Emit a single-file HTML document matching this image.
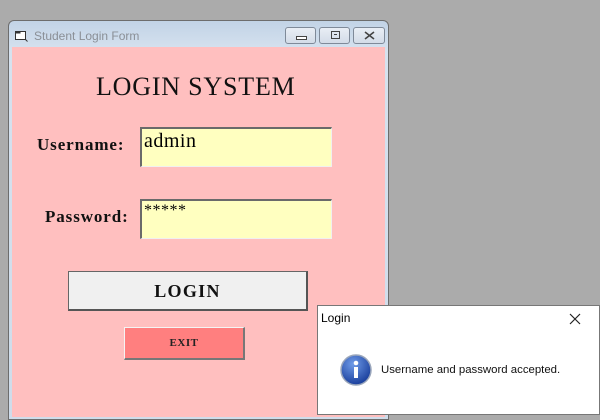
<!DOCTYPE html>
<html><head><style>
body{margin:0;width:600px;height:411px;background:#ababab;position:relative;overflow:hidden;font-family:"Liberation Serif",serif}
.win{position:absolute;left:8px;top:20px;width:381px;height:400px;background:linear-gradient(#c2d3e6,#d6e2ef 30px,#cfdcea);border:1px solid #6d6d6d;border-radius:6px 6px 0 0;box-sizing:border-box}
.title{position:absolute;left:25px;top:8px;font:12px "Liberation Sans",sans-serif;color:#8a8f96}
.tb{position:absolute;top:6px;height:17px;border:1px solid #7f8a99;border-radius:3px;background:linear-gradient(#e9eef5,#d3dce8);box-sizing:border-box}
.client{position:absolute;left:12px;top:47px;width:373px;height:370px;background:#ffbfbf}
.abs{position:absolute}
.tbx{position:absolute;left:140px;width:192px;height:40px;background:#ffffc0;border-top:2px solid #6a6a6a;border-left:2px solid #6a6a6a;border-right:1px solid #f0f0f0;border-bottom:1px solid #f0f0f0;box-sizing:border-box;font-size:20px;padding-left:2px;line-height:24px;letter-spacing:0.5px}
.lbl{position:absolute;font-weight:bold;font-size:17px;color:#111;letter-spacing:0.9px}
</style></head><body>
<div class="win">
 <svg class="abs" style="left:5px;top:8px" width="14" height="13"><rect x="1.5" y="2.5" width="10" height="8" fill="#fff" stroke="#333"/><rect x="1.5" y="2.5" width="5" height="2" fill="#333"/><path d="M11.5 10.5l2 2" stroke="#333"/></svg>
 <div class="title">Student Login Form</div>
 <div class="tb" style="left:276px;width:31px"><div class="abs" style="left:10px;top:8px;width:9px;height:2px;border:1px solid #444;background:#fff"></div></div>
 <div class="tb" style="left:310px;width:31px"><div class="abs" style="left:11px;top:3px;width:7px;height:6px;border:1px solid #444"><div class="abs" style="left:2px;top:2px;width:3px;height:1px;background:#444"></div></div></div>
 <div class="tb" style="left:344px;width:32px"><svg class="abs" style="left:10px;top:3px" width="11" height="9"><path d="M1 1L10 8M10 1L1 8" stroke="#444" stroke-width="1.6"/></svg></div>
</div>
<div class="client"></div>
<div class="abs" style="left:96px;top:72px;font-size:26px;color:#111;letter-spacing:0.8px">LOGIN SYSTEM</div>
<div class="lbl" style="left:37px;top:135px">Username:</div>
<div class="lbl" style="left:45px;top:207px">Password:</div>
<div class="tbx" style="top:127px">admin</div>
<div class="tbx" style="top:199px;font-size:16px;line-height:20px">*****</div>
<div class="abs" style="left:68px;top:271px;width:240px;height:40px;background:#f0f0f0;border:1px solid #666;border-right:2px solid #555;border-bottom:2px solid #555;box-sizing:border-box;text-align:center;font-weight:bold;font-size:18px;line-height:38px;color:#111;letter-spacing:1.3px">LOGIN</div>
<div class="abs" style="left:124px;top:327px;width:121px;height:33px;background:#ff7f7f;border:1px solid #f4f4f4;border-right:2px solid #777;border-bottom:2px solid #777;box-sizing:border-box;text-align:center;font-weight:bold;font-size:11px;line-height:30px;color:#222;letter-spacing:0.5px">EXIT</div>
<div class="abs" style="left:317px;top:305px;width:283px;height:110px;background:#fff;border:1px solid #777;box-sizing:border-box">
 <div class="abs" style="left:3px;top:5px;font:12px 'Liberation Sans',sans-serif;color:#000">Login</div>
 <svg class="abs" style="left:251px;top:7px" width="12" height="12"><path d="M1 1L11 11M11 1L1 11" stroke="#222" stroke-width="1.2"/></svg>
 <svg class="abs" style="left:22px;top:48px" width="32" height="32"><defs><radialGradient id="g" cx="40%" cy="30%" r="70%"><stop offset="0" stop-color="#6f9be8"/><stop offset="1" stop-color="#1a3f9c"/></radialGradient></defs><circle cx="16" cy="16" r="15" fill="url(#g)" stroke="#9aa6bb" stroke-width="1.5"/><circle cx="16" cy="9" r="2.3" fill="#fff"/><rect x="14" y="13" width="4" height="11" fill="#fff"/></svg>
 <div class="abs" style="left:63px;top:58px;font:11.4px 'Liberation Sans',sans-serif;color:#111">Username and password accepted.</div>
</div>
</body></html>
